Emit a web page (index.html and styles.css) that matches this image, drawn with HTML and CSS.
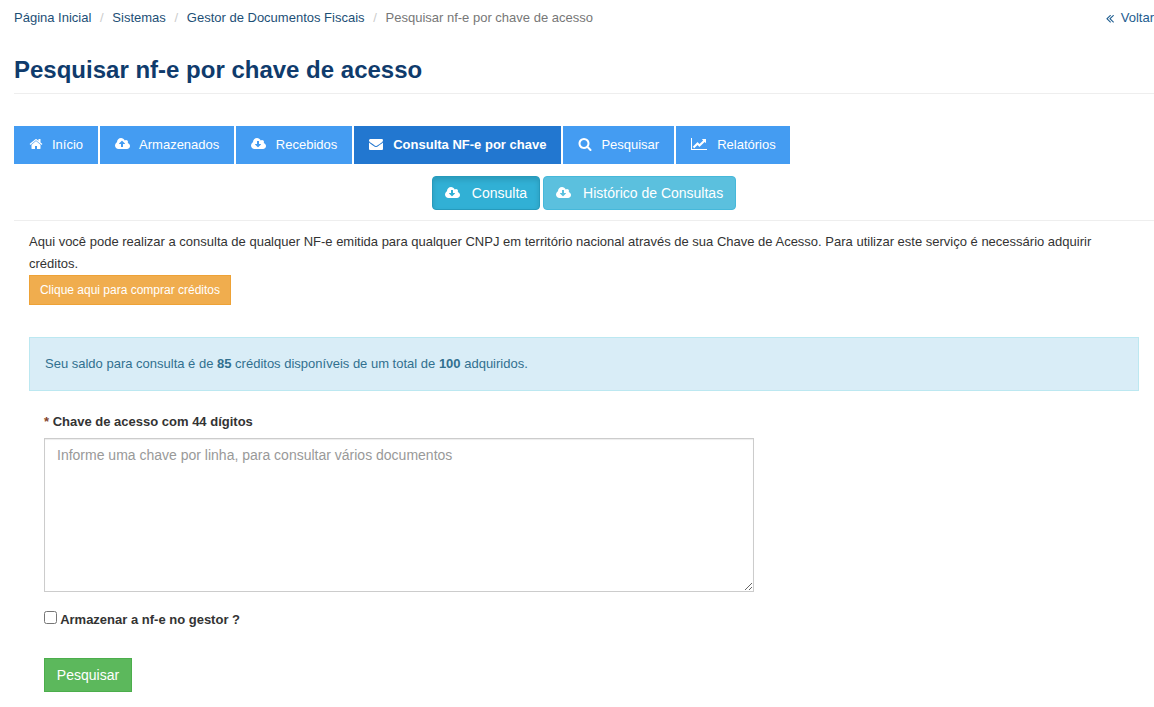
FILE: index.html
```html
<!DOCTYPE html>
<html lang="en">
<head>
    <meta charset="UTF-8">
    <meta name="viewport" content="width=device-width, initial-scale=1.0">
    <title>Pesquisar nf-e por chave de acesso</title>
    <link rel="stylesheet" href="styles.css">
</head>
<body>
    <svg class="sprite" xmlns="http://www.w3.org/2000/svg">
        <symbol id="i-home" viewBox="0 0 1792 1792" preserveAspectRatio="xMinYMid"><path d="M1472 992v480q0 26-19 45t-45 19h-384v-384h-256v384h-384q-26 0-45-19t-19-45v-480q0-1 .5-3t.5-3l575-474 575 474q1 2 1 6zm223-69l-62 74q-8 9-21 11h-3q-13 0-21-7l-692-577-692 577q-12 8-24 7-13-2-21-11l-62-74q-8-10-7-23.500t11-21.500l719-599q32-26 76-26t76 26l244 204v-195q0-14 9-23t23-9h192q14 0 23 9t9 23v408l219 182q10 8 11 21.500t-7 23.500z"/></symbol>
        <symbol id="i-up" viewBox="0 0 1920 1792" preserveAspectRatio="xMinYMid"><path d="M1280 864q0-14-9-23l-352-352q-9-9-23-9t-23 9l-351 351q-10 12-10 24 0 14 9 23t23 9h224v352q0 13 9.500 22.500t22.500 9.500h192q13 0 22.500-9.500t9.500-22.500v-352h224q13 0 22.500-9.500t9.500-22.500zm640 288q0 159-112.500 271.500t-271.500 112.500h-1088q-185 0-316.500-131.500t-131.500-316.500q0-130 70-240t188-165q-2-30-2-43 0-212 150-362t362-150q156 0 285.500 87t188.500 231q71-62 166-62 106 0 181 75t75 181q0 76-41 138 130 31 213.500 135.500t83.500 238.500z"/></symbol>
        <symbol id="i-down" viewBox="0 0 1920 1792" preserveAspectRatio="xMinYMid"><path d="M1280 928q0-14-9-23t-23-9h-224v-352q0-13-9.500-22.500t-22.500-9.500h-192q-13 0-22.500 9.500t-9.500 22.500v352h-224q-13 0-22.500 9.500t-9.500 22.500q0 14 9 23l352 352q9 9 23 9t23-9l351-351q10-12 10-24zm640 224q0 159-112.500 271.500t-271.500 112.500h-1088q-185 0-316.500-131.500t-131.500-316.500q0-130 70-240t188-165q-2-30-2-43 0-212 150-362t362-150q156 0 285.500 87t188.500 231q71-62 166-62 106 0 181 75t75 181q0 76-41 138 130 31 213.500 135.500t83.500 238.500z"/></symbol>
        <symbol id="i-mail" viewBox="0 0 1792 1792" preserveAspectRatio="xMinYMid"><path d="M1792 710v794q0 66-47 113t-113 47h-1472q-66 0-113-47t-47-113v-794q44 49 101 87 362 246 497 345 57 42 92.500 65.500t94.500 48 110 24.500h2q51 0 110-24.500t94.500-48 92.500-65.500q170-123 498-345 57-39 100-87zm0-294q0 79-49 151t-122 123q-376 261-468 325-10 7-42.500 30.500t-54 38-52 32.500-57.500 27-50 9h-2q-23 0-50-9t-57.500-27-52-32.500-54-38-42.500-30.500q-91-64-262-182.500t-205-142.500q-62-42-117-115.500t-55-136.500q0-78 41.500-130t118.500-52h1472q65 0 112.500 47t47.500 113z"/></symbol>
        <symbol id="i-search" viewBox="0 0 1792 1792" preserveAspectRatio="xMinYMid"><path d="M1216 832q0-185-131.500-316.500t-316.500-131.500-316.500 131.500-131.500 316.500 131.500 316.500 316.500 131.500 316.500-131.500 131.500-316.500zm512 832q0 52-38 90t-90 38q-54 0-90-38l-343-342q-179 124-399 124-143 0-273.500-55.500t-225-150-150-225-55.500-273.500 55.500-273.500 150-225 225-150 273.500-55.500 273.500 55.500 225 150 150 225 55.500 273.500q0 220-124 399l343 343q37 37 37 90z"/></symbol>
        <symbol id="i-chart" viewBox="0 0 2048 1792" preserveAspectRatio="xMinYMid"><path d="M2048 1536v128h-2048v-1536h128v1408h1920zm-128-1248v435q0 21-19.500 29.500t-35.500-7.500l-121-121-633 633q-10 10-23 10t-23-10l-233-233-416 416-192-192 585-585q10-10 23-10t23 10l233 233 464-464-121-121q-16-16-7.500-35.500t29.500-19.500h435q14 0 23 9t9 23z"/></symbol>
        <symbol id="i-back" viewBox="0 0 1024 1792" preserveAspectRatio="xMinYMid"><path d="M627 1411q0 13-10 23l-50 50q-10 10-23 10t-23-10l-466-466q-10-10-10-23t10-23l466-466q10-10 23-10t23 10l50 50q10 10 10 23t-10 23l-393 393 393 393q10 10 10 23zm384 0q0 13-10 23l-50 50q-10 10-23 10t-23-10l-466-466q-10-10-10-23t10-23l466-466q10-10 23-10t23 10l50 50q10 10 10 23t-10 23l-393 393 393 393q10 10 10 23z"/></symbol>
    </svg>

    <!-- Breadcrumb -->
    <div class="top-bar">
        <ol class="breadcrumb">
            <li><a href="#">Página Inicial</a></li>
            <li><a href="#">Sistemas</a></li>
            <li><a href="#">Gestor de Documentos Fiscais</a></li>
            <li class="current">Pesquisar nf-e por chave de acesso</li>
        </ol>
        <a class="back-link" href="#"><svg class="icon-back"><use href="#i-back"/></svg>Voltar</a>
    </div>

    <h1 class="page-title">Pesquisar nf-e por chave de acesso</h1>

    <!-- Main tabs -->
    <nav class="tabs">
        <a class="tab" href="#"><svg class="icon icon-home"><use href="#i-home"/></svg>Início</a>
        <a class="tab" href="#"><svg class="icon"><use href="#i-up"/></svg>Armazenados</a>
        <a class="tab" href="#"><svg class="icon icon-down"><use href="#i-down"/></svg>Recebidos</a>
        <a class="tab active" href="#"><svg class="icon"><use href="#i-mail"/></svg>Consulta NF-e por chave</a>
        <a class="tab" href="#"><svg class="icon icon-search"><use href="#i-search"/></svg>Pesquisar</a>
        <a class="tab tab-last" href="#"><svg class="icon icon-chart"><use href="#i-chart"/></svg>Relatórios</a>
    </nav>

    <!-- Sub tabs -->
    <div class="sub-tabs">
        <a class="sub-tab active" href="#"><svg class="icon"><use href="#i-down"/></svg>Consulta</a>
        <a class="sub-tab" href="#"><svg class="icon"><use href="#i-down"/></svg>Histórico de Consultas</a>
    </div>

    <section class="content">
        <p class="intro">Aqui você pode realizar a consulta de qualquer NF-e emitida para qualquer CNPJ em território nacional através de sua Chave de Acesso. Para utilizar este serviço é necessário adquirir créditos.</p>
        <a class="btn-buy" href="#">Clique aqui para comprar créditos</a>

        <div class="alert">Seu saldo para consulta é de <strong>85</strong> créditos disponíveis de um total de <strong>100</strong> adquiridos.</div>

        <form class="search-form">
            <label class="field-label" for="chave"><span class="required">*</span> Chave de acesso com 44 dígitos</label>
            <textarea id="chave" class="keys" placeholder="Informe uma chave por linha, para consultar vários documentos"></textarea>
            <label class="check-label"><input type="checkbox"> Armazenar a nf-e no gestor ?</label>
            <button class="btn-search" type="button">Pesquisar</button>
        </form>
    </section>
</body>
</html>
```

FILE: styles.css
```css
/* General Styles */
* {
    box-sizing: border-box;
}

body {
    margin: 0;
    padding: 0 0 0 14px;
    font-family: "Liberation Sans", Arial, sans-serif;
    font-size: 13px;
    line-height: 1.42857;
    color: #333;
    background: #fff;
}

a {
    color: #1d4f76;
    text-decoration: none;
}

.sprite {
    display: none;
}

.icon {
    width: 16px;
    height: 14px;
    margin-right: 8px;
    margin-bottom: 2px;
    fill: currentColor;
    flex: none;
}

/* Breadcrumb */
.top-bar {
    display: flex;
    justify-content: space-between;
    align-items: center;
    height: 36px;
}

.breadcrumb {
    display: flex;
    list-style: none;
    margin: 0;
    padding: 0;
    color: #777;
}

.breadcrumb li + li::before {
    content: "/";
    padding: 0 8.7px;
    color: #ccc;
}

.back-link {
    display: flex;
    align-items: center;
    color: #1d5c8f;
}

.icon-back {
    width: 8px;
    height: 14px;
    margin-right: 7px;
    fill: currentColor;
}

.page-title {
    margin: 0 0 32px;
    padding: 18px 0 8px;
    height: 58px;
    font-size: 24px;
    line-height: 32px;
    font-weight: 700;
    color: #0f3b6c;
    border-bottom: 1px solid #eee;
}

/* Tabs */
.tabs {
    display: flex;
    gap: 2px;
}

.tab {
    display: flex;
    align-items: center;
    height: 38px;
    padding: 0 15px;
    background: #449cf2;
    color: #fff;
}

.tab .icon-home {
    margin-right: 7px;
}

.tab .icon-down {
    margin-right: 8.5px;
}

.tab .icon-search {
    margin-right: 7px;
}

.tab .icon-chart {
    width: 18px;
}

.tab-last {
    padding-right: 14.5px;
}

.tab.active {
    background: #2277d0;
    font-weight: 700;
}

.sub-tabs {
    display: flex;
    justify-content: center;
    gap: 3px;
    margin-top: 12px;
    padding-bottom: 10px;
    border-bottom: 1px solid #eee;
}

.sub-tab {
    display: flex;
    align-items: center;
    height: 34px;
    padding: 1px 12px 0;
    font-size: 14px;
    color: #fff;
    background: #5bc0de;
    border: 1px solid #46b8da;
    border-radius: 4px;
}

.sub-tab .icon {
    margin-right: 11px;
}

.sub-tab.active {
    background: #31b0d5;
    border-color: #269abc;
    box-shadow: inset 0 3px 5px rgba(0, 0, 0, 0.125);
}

/* Content */
.content {
    padding: 10px 15px 0;
}

.intro {
    margin: 0;
    line-height: 22px;
}

.btn-buy {
    display: block;
    width: 202px;
    height: 30px;
    font-size: 12px;
    line-height: 28px;
    text-align: center;
    color: #fff;
    background: #f0ad4e;
    border: 1px solid #eea236;
}

.alert {
    margin-top: 32px;
    padding: 15px;
    height: 54px;
    line-height: 22px;
    color: #31708f;
    background: #d9edf7;
    border: 1px solid #bce8f1;
}

.search-form {
    padding: 21px 15px 0;
}

.field-label {
    display: block;
    height: 26px;
    line-height: 19px;
    font-weight: 700;
}

.required {
    color: #84442a;
}

.keys {
    display: block;
    width: 710px;
    height: 154px;
    padding: 6px 12px;
    font-family: inherit;
    font-size: 14px;
    line-height: 20px;
    color: #555;
    border: 1px solid #ccc;
    box-shadow: inset 0 1px 1px rgba(0, 0, 0, 0.075);
}

.keys::placeholder {
    color: #999;
}

.check-label {
    display: block;
    margin-top: 17px;
    height: 21px;
    font-weight: 700;
    line-height: 21px;
}

.check-label input {
    margin: 0;
    vertical-align: 0;
}

.btn-search {
    display: block;
    margin-top: 28px;
    width: 88px;
    height: 34px;
    padding: 0;
    font-family: inherit;
    font-size: 14px;
    color: #fff;
    background: #5cb85c;
    border: 1px solid #4cae4c;
}
```
